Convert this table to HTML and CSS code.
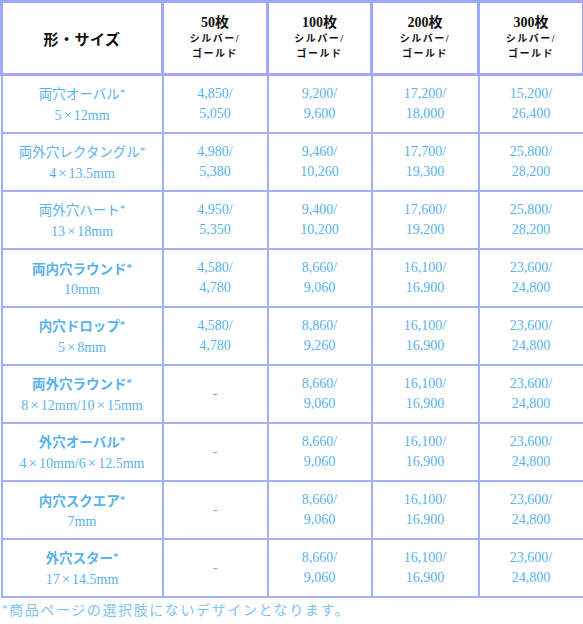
FILE: index.html
```html
<!DOCTYPE html>
<html lang="ja">
<head>
<meta charset="utf-8">
<title>価格表</title>
<link rel="stylesheet" href="styles.css">
</head>
<body>
<div class="wrap">
<table class="price">
  <colgroup>
    <col class="c1"><col class="c2"><col class="c3"><col class="c4"><col class="c5">
  </colgroup>
  <thead>
    <tr>
      <th class="shape-head">形・サイズ</th>
      <th><span class="qty">50枚</span><span class="sub">シルバー/</span><span class="sub">ゴールド</span></th>
      <th><span class="qty">100枚</span><span class="sub">シルバー/</span><span class="sub">ゴールド</span></th>
      <th><span class="qty">200枚</span><span class="sub">シルバー/</span><span class="sub">ゴールド</span></th>
      <th><span class="qty">300枚</span><span class="sub">シルバー/</span><span class="sub">ゴールド</span></th>
    </tr>
  </thead>
  <tbody>
    <tr>
      <td><span class="name">両穴オーバル<span class="ast">*</span></span><span class="size">5<span class="x">×</span>12mm</span></td>
      <td>4,850/<br>5,050</td><td>9,200/<br>9,600</td><td>17,200/<br>18,000</td><td>15,200/<br>26,400</td>
    </tr>
    <tr>
      <td><span class="name">両外穴レクタングル<span class="ast">*</span></span><span class="size">4<span class="x">×</span>13.5mm</span></td>
      <td>4,980/<br>5,380</td><td>9,460/<br>10,260</td><td>17,700/<br>19,300</td><td>25,800/<br>28,200</td>
    </tr>
    <tr>
      <td><span class="name">両外穴ハート<span class="ast">*</span></span><span class="size">13<span class="x">×</span>18mm</span></td>
      <td>4,950/<br>5,350</td><td>9,400/<br>10,200</td><td>17,600/<br>19,200</td><td>25,800/<br>28,200</td>
    </tr>
    <tr>
      <td><span class="name bold">両内穴ラウンド<span class="ast">*</span></span><span class="size">10mm</span></td>
      <td>4,580/<br>4,780</td><td>8,660/<br>9,060</td><td>16,100/<br>16,900</td><td>23,600/<br>24,800</td>
    </tr>
    <tr>
      <td><span class="name bold">内穴ドロップ<span class="ast">*</span></span><span class="size">5<span class="x">×</span>8mm</span></td>
      <td>4,580/<br>4,780</td><td>8,860/<br>9,260</td><td>16,100/<br>16,900</td><td>23,600/<br>24,800</td>
    </tr>
    <tr>
      <td><span class="name bold">両外穴ラウンド<span class="ast">*</span></span><span class="size">8<span class="x">×</span>12mm/10<span class="x">×</span>15mm</span></td>
      <td class="dash">-</td><td>8,660/<br>9,060</td><td>16,100/<br>16,900</td><td>23,600/<br>24,800</td>
    </tr>
    <tr>
      <td><span class="name bold">外穴オーバル<span class="ast">*</span></span><span class="size">4<span class="x">×</span>10mm/6<span class="x">×</span>12.5mm</span></td>
      <td class="dash">-</td><td>8,660/<br>9,060</td><td>16,100/<br>16,900</td><td>23,600/<br>24,800</td>
    </tr>
    <tr>
      <td><span class="name bold">内穴スクエア<span class="ast">*</span></span><span class="size">7mm</span></td>
      <td class="dash">-</td><td>8,660/<br>9,060</td><td>16,100/<br>16,900</td><td>23,600/<br>24,800</td>
    </tr>
    <tr>
      <td><span class="name bold">外穴スター<span class="ast">*</span></span><span class="size">17<span class="x">×</span>14.5mm</span></td>
      <td class="dash">-</td><td>8,660/<br>9,060</td><td>16,100/<br>16,900</td><td>23,600/<br>24,800</td>
    </tr>
  </tbody>
</table>
<p class="note"><span class="ast">*</span>商品ページの選択肢にないデザインとなります。</p>
</div>
</body>
</html>
```
FILE: styles.css
```css
html, body {
  margin: 0;
  padding: 0;
  background: #ffffff;
}
body {
  font-family: "Liberation Serif", "Noto Sans CJK JP", serif;
  color: #58b3ec;
}
.wrap {
  width: 583px;
}
.price {
  width: 582px;
  border-collapse: collapse;
  table-layout: fixed;
}
.c1 { width: 161px; }
.c2 { width: 105px; }
.c3 { width: 104px; }
.c4 { width: 107px; }
.c5 { width: 105px; }

.price th {
  border: 3px solid #9eaaf6;
  height: 70px;
  padding: 0;
  color: #111111;
  font-weight: bold;
  text-align: center;
  vertical-align: middle;
}
.shape-head {
  font-size: 15px;
  letter-spacing: 0.5px;
}
.qty {
  display: block;
  font-size: 14px;
  line-height: 16px;
}
.sub {
  display: block;
  font-size: 10px;
  line-height: 15px;
  letter-spacing: 1.5px;
}
.price td {
  border: 2px solid #a4aff6;
  height: 56px;
  padding: 0;
  text-align: center;
  vertical-align: middle;
  font-size: 14px;
  line-height: 20px;
}
.name, .size {
  display: block;
}
.name {
  font-size: 13.5px;
}
.x {
  font-size: 15px;
  margin: 0 2px;
}
.bold {
  font-weight: bold;
}
.ast {
  font-size: 11px;
  vertical-align: 3px;
}
.dash {
  font-size: 11px;
}
.note {
  margin: 0;
  padding: 0 0 0 2px;
  font-size: 14px;
  line-height: 20px;
  letter-spacing: 1.6px;
  color: #7cc4ef;
}
```
